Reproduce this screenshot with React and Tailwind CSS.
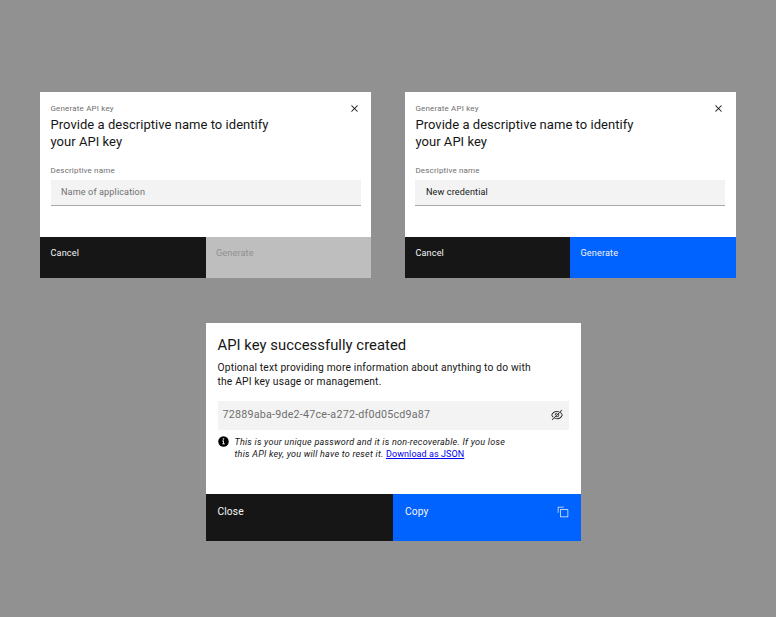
function CloseIcon() {
  return (
    <svg className="size-[13px]" viewBox="0 0 32 32" fill="#161616" stroke="#161616" strokeWidth="0.4">
      <path d="M24 9.4 22.6 8 16 14.6 9.4 8 8 9.4 14.6 16 8 22.6 9.4 24 16 17.4 22.6 24 24 22.6 17.4 16z" />
    </svg>
  );
}

function ViewOffIcon() {
  return (
    <svg className="size-3" viewBox="0 0 32 32" fill="#161616">
      <path d="M5.24,22.51l1.43-1.42A14.06,14.06,0,0,1,3.07,16C5.1,10.93,10.7,7,16,7a12.38,12.38,0,0,1,4,.72l1.55-1.56A14.72,14.72,0,0,0,16,5,16.69,16.69,0,0,0,1.06,15.66a1,1,0,0,0,0,.68A16,16,0,0,0,5.24,22.51Z" />
      <path d="M12,15.73a4,4,0,0,1,3.7-3.7l1.81-1.82a6,6,0,0,0-7.33,7.33Z" />
      <path d="M30.94,15.66A16.4,16.4,0,0,0,25.2,8.22L30,3.41,28.59,2,2,28.59,3.41,30l5.1-5.1A15.29,15.29,0,0,0,16,27,16.69,16.69,0,0,0,30.94,16.34,1,1,0,0,0,30.94,15.66ZM20,16a4,4,0,0,1-6,3.44L19.44,14A4,4,0,0,1,20,16Zm-4,9a13.05,13.05,0,0,1-6-1.58l2.54-2.54a6,6,0,0,0,8.35-8.35l2.87-2.87A14.54,14.54,0,0,1,28.93,16C26.9,21.07,21.3,25,16,25Z" />
    </svg>
  );
}

function CopyIcon() {
  return (
    <svg className="size-3" viewBox="0 0 32 32" fill="#f4f4f4">
      <path d="M28,10V28H10V10H28m0-2H10a2,2,0,0,0-2,2V28a2,2,0,0,0,2,2H28a2,2,0,0,0,2-2V10a2,2,0,0,0-2-2Z" />
      <path d="M4,18H2V4A2,2,0,0,1,4,2H18V4H4Z" />
    </svg>
  );
}

function InfoIcon() {
  return (
    <svg className="size-[11px] shrink-0" viewBox="0 0 22 22">
      <circle cx="11" cy="11" r="10.5" fill="#000" />
      <circle cx="11" cy="6" r="1.6" fill="#fff" />
      <path d="M8.5 9.2h3.4v5.6h2v1.7H8.3v-1.7h1.9v-3.9H8.5z" fill="#fff" />
    </svg>
  );
}

function GenerateModal({ value, placeholder }) {
  const ready = Boolean(value);
  return (
    <section className="flex h-[186px] w-[331px] flex-col bg-white">
      <div className={`flex-1 pt-[11px] ${ready ? "pr-[11px] pl-[10.4px]" : "px-[10.5px]"}`}>
        <div className="flex justify-between">
          <div>
            <p className="h-[13px] text-[8px] leading-[11px] tracking-[0.17px] text-[#6f6f6f]">Generate API key</p>
            <h2 className="text-[13px] leading-[17px] tracking-[0.04px] text-[#161616]">
              Provide a descriptive name to identify
              <br />
              your API key
            </h2>
          </div>
          <button className="-mt-px flex size-[13px] items-center justify-center" aria-label="Close">
            <CloseIcon />
          </button>
        </div>
        <p className="mt-[15px] h-[12px] text-[8px] leading-[11px] tracking-[0.17px] text-[#6f6f6f]">Descriptive name</p>
        <div
          className={`mt-[3px] flex h-[26px] items-center border-b border-[#a8a8a8] bg-[#f3f3f3] pt-px pl-[10.5px] text-[9.1px] tracking-[0.12px] ${
            ready ? "text-[#161616]" : "text-[#6f6f6f]"
          }`}
        >
          {value || placeholder}
        </div>
      </div>
      <div className={`grid h-[41px] text-[9.1px] leading-[12px] tracking-[0.15px] ${ready ? "grid-cols-[165px_166px]" : "grid-cols-[166px_165px]"}`}>
        <button className={`flex items-start bg-[#161616] pt-[10px] text-[#f4f4f4] ${ready ? "pl-[10.4px]" : "pl-[10.5px]"}`}>Cancel</button>
        <button
          className={`flex items-start pt-[10px] ${
            ready ? "bg-[#0062ff] pl-[10.5px] text-[#f4f4f4]" : "bg-[#bebebe] pl-[10px] text-[#8f8f8f]"
          }`}
        >
          Generate
        </button>
      </div>
    </section>
  );
}

function SuccessModal() {
  return (
    <section className="flex h-[218px] w-[375px] flex-col bg-white">
      <div className="flex-1 pt-[13px] pr-[12px] pl-[11.5px]">
        <h2 className="text-[14.8px] leading-[19px] tracking-[0.04px] text-[#161616]">API key successfully created</h2>
        <p className="mt-[5.5px] text-[10.25px] leading-[14.5px] tracking-[0.17px] text-[#161616]">
          Optional text providing more information about anything to do with
          <br />
          the API key usage or management.
        </p>
        <div className="mt-[11px] flex h-[29px] items-center justify-between bg-[#f3f3f3] pr-[6px] pl-[5px] text-[10.7px] tracking-[0.23px] text-[#6f6f6f]">
          <span className="pt-px">72889aba-9de2-47ce-a272-df0d05cd9a87</span>
          <ViewOffIcon />
        </div>
        <div className="mt-[6px] flex gap-[6px]">
          <InfoIcon />
          <p className="text-[9px] leading-[12px] tracking-[0.24px] text-[#161616]">
            <span className="italic">
              This is your unique password and it is non-recoverable. If you lose
              <br />
              this API key, you will have to reset it.
            </span>{" "}
            <a href="#" className="tracking-[0.08px] text-[#0000ee] underline">Download as JSON</a>
          </p>
        </div>
      </div>
      <div className="grid h-[47px] grid-cols-[187px_188px] text-[10.25px] leading-[14px] tracking-[0.1px] text-[#f4f4f4]">
        <button className="flex items-start bg-[#161616] pt-[11px] pl-[11.5px]">Close</button>
        <button className="flex items-start justify-between bg-[#0062ff] px-[12px] pt-[11px]">
          Copy
          <span className="mt-px">
            <CopyIcon />
          </span>
        </button>
      </div>
    </section>
  );
}

export default function App() {
  return (
    <main className="flex h-[617px] w-[776px] flex-col items-center bg-[#919191] pt-[92px] font-['Roboto',sans-serif]">
      <div className="flex w-full justify-between px-[40px]">
        <GenerateModal placeholder="Name of application" />
        <GenerateModal value="New credential" />
      </div>
      <div className="mt-[45px] pl-[11px]">
        <SuccessModal />
      </div>
    </main>
  );
}
